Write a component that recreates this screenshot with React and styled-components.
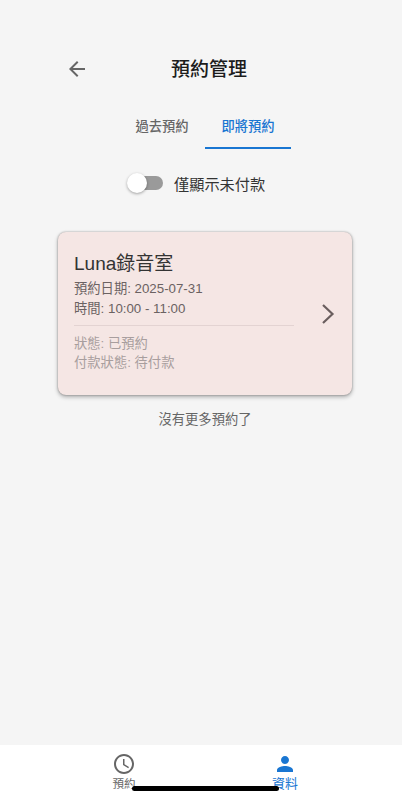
import React from "react";
import styled, { createGlobalStyle } from "styled-components";

const FONT = `"Liberation Sans", "Noto Sans CJK TC", sans-serif`;

const GlobalStyle = createGlobalStyle`
  html, body {
    margin: 0;
    padding: 0;
    background: #f5f5f5;
  }
  * {
    box-sizing: border-box;
  }
`;

const App = () => {
  return (
    <Page>
      <GlobalStyle />
      <Content>
        <Header>
          <BackButton aria-label="back">
            <svg width="24" height="24" viewBox="0 0 24 24" fill="#666">
              <path d="M20 11H7.83l5.59-5.59L12 4l-8 8 8 8 1.41-1.41L7.83 13H20v-2z" />
            </svg>
          </BackButton>
          <Title>預約管理</Title>
        </Header>

        <Tabs>
          <Tab>過去預約</Tab>
          <Tab $active>即將預約</Tab>
        </Tabs>

        <FilterRow>
          <Switch>
            <SwitchKnob />
          </Switch>
          <FilterLabel>僅顯示未付款</FilterLabel>
        </FilterRow>

        <Card>
          <CardBody>
            <CardTitle>Luna錄音室</CardTitle>
            <InfoLine>預約日期: 2025-07-31</InfoLine>
            <InfoLine>時間: 10:00 - 11:00</InfoLine>
            <Divider />
            <InfoLine $muted>狀態: 已預約</InfoLine>
            <InfoLine $muted>付款狀態: 待付款</InfoLine>
          </CardBody>
          <Chevron>
            <svg width="14" height="22" viewBox="0 0 14 22" fill="none" stroke="#6a5e5e" strokeWidth="2.2">
              <path d="M2 2l9.5 9L2 20" />
            </svg>
          </Chevron>
        </Card>

        <EndNote>沒有更多預約了</EndNote>
      </Content>

      <BottomNav>
        <NavItem>
          <svg width="24" height="24" viewBox="0 0 24 24" fill="#666">
            <path d="M11.99 2C6.47 2 2 6.48 2 12s4.47 10 9.99 10C17.52 22 22 17.52 22 12S17.52 2 11.99 2zM12 20c-4.42 0-8-3.58-8-8s3.58-8 8-8 8 3.58 8 8-3.58 8-8 8zm.5-13H11v6l5.25 3.15.75-1.23-4.5-2.67z" />
          </svg>
          <NavLabel>預約</NavLabel>
        </NavItem>
        <NavItem $active>
          <svg width="24" height="24" viewBox="0 0 24 24" fill="#1976d2">
            <path d="M12 12c2.21 0 4-1.79 4-4s-1.79-4-4-4-4 1.79-4 4 1.79 4 4 4zm0 2c-2.67 0-8 1.34-8 4v2h16v-2c0-2.66-5.33-4-8-4z" />
          </svg>
          <NavLabel $active>資料</NavLabel>
        </NavItem>
        <HomeIndicator />
      </BottomNav>
    </Page>
  );
};

export default App;

const Page = styled.div`
  width: 402px;
  height: 800px;
  display: flex;
  flex-direction: column;
  background: #f5f5f5;
  font-family: ${FONT};
  overflow: hidden;
`;

const Content = styled.main`
  flex: 1;
  padding: 52px 50px 0 58px;
  display: flex;
  flex-direction: column;
`;

const Header = styled.header`
  height: 34px;
  display: flex;
  align-items: center;
`;

const BackButton = styled.div`
  width: 24px;
  height: 24px;
  margin-left: 7px;
`;

const Title = styled.h1`
  margin: 0 0 0 82px;
  font-size: 19px;
  font-weight: 500;
  color: #1c1c1c;
  line-height: 1;
`;

const Tabs = styled.div`
  margin-top: 13px;
  display: flex;
  justify-content: center;
`;

const Tab = styled.div`
  width: 86px;
  height: 50px;
  padding-top: 4px;
  display: flex;
  align-items: center;
  justify-content: center;
  font-size: 13.3px;
  font-weight: 500;
  color: ${(p) => (p.$active ? "#1976d2" : "#666")};
  border-bottom: 2px solid ${(p) => (p.$active ? "#1976d2" : "transparent")};
`;

const FilterRow = styled.div`
  margin-top: 14px;
  height: 40px;
  display: flex;
  align-items: center;
  padding-left: 70px;
  gap: 11px;
`;

const Switch = styled.div`
  position: relative;
  width: 35px;
  height: 14px;
  border-radius: 7px;
  background: #9a9a9a;
`;

const SwitchKnob = styled.span`
  position: absolute;
  left: -1px;
  top: -3px;
  width: 20px;
  height: 20px;
  border-radius: 50%;
  background: #fff;
  box-shadow: 0 1px 3px rgba(0, 0, 0, 0.35);
`;

const FilterLabel = styled.span`
  font-size: 15.2px;
  color: #333;
`;

const Card = styled.article`
  margin-top: 29px;
  width: 294px;
  height: 163px;
  padding: 19px 12px 0 16px;
  display: flex;
  align-items: flex-start;
  background: #f5e6e4;
  border-radius: 8px;
  box-shadow: 0 2px 4px rgba(0, 0, 0, 0.3), 0 0 2px rgba(0, 0, 0, 0.35);
`;

const CardBody = styled.div`
  width: 220px;
`;

const CardTitle = styled.h2`
  margin: 0 0 2px;
  font-size: 19px;
  font-weight: 400;
  line-height: 26px;
  color: #333;
`;

const InfoLine = styled.p`
  margin: 0;
  font-size: 13.3px;
  line-height: 19.5px;
  color: ${(p) => (p.$muted ? "#a89e9e" : "#6b6262")};
`;

const Divider = styled.hr`
  margin: 7px 0 7.5px;
  border: 0;
  height: 1px;
  background: #e3d3d2;
`;

const Chevron = styled.div`
  margin: 52px 0 0 27px;
  width: 14px;
  height: 22px;
`;

const EndNote = styled.p`
  margin: 15px 0 0;
  width: 294px;
  text-align: center;
  font-size: 13.3px;
  line-height: 20px;
  color: #666;
`;

const BottomNav = styled.nav`
  position: relative;
  height: 55px;
  padding-top: 7px;
  padding-left: 7px;
  background: #fff;
  display: grid;
  grid-template-columns: 161px 161px;
  justify-content: center;
  justify-items: center;
`;

const NavItem = styled.div`
  display: flex;
  flex-direction: column;
  align-items: center;
  height: 40px;
  color: ${(p) => (p.$active ? "#1976d2" : "#666")};
`;

const NavLabel = styled.span`
  font-size: ${(p) => (p.$active ? "13px" : "11.5px")};
  line-height: 16px;
`;

const HomeIndicator = styled.div`
  position: absolute;
  left: 132px;
  bottom: 9px;
  width: 147px;
  height: 5px;
  border-radius: 3px;
  background: #000;
`;
